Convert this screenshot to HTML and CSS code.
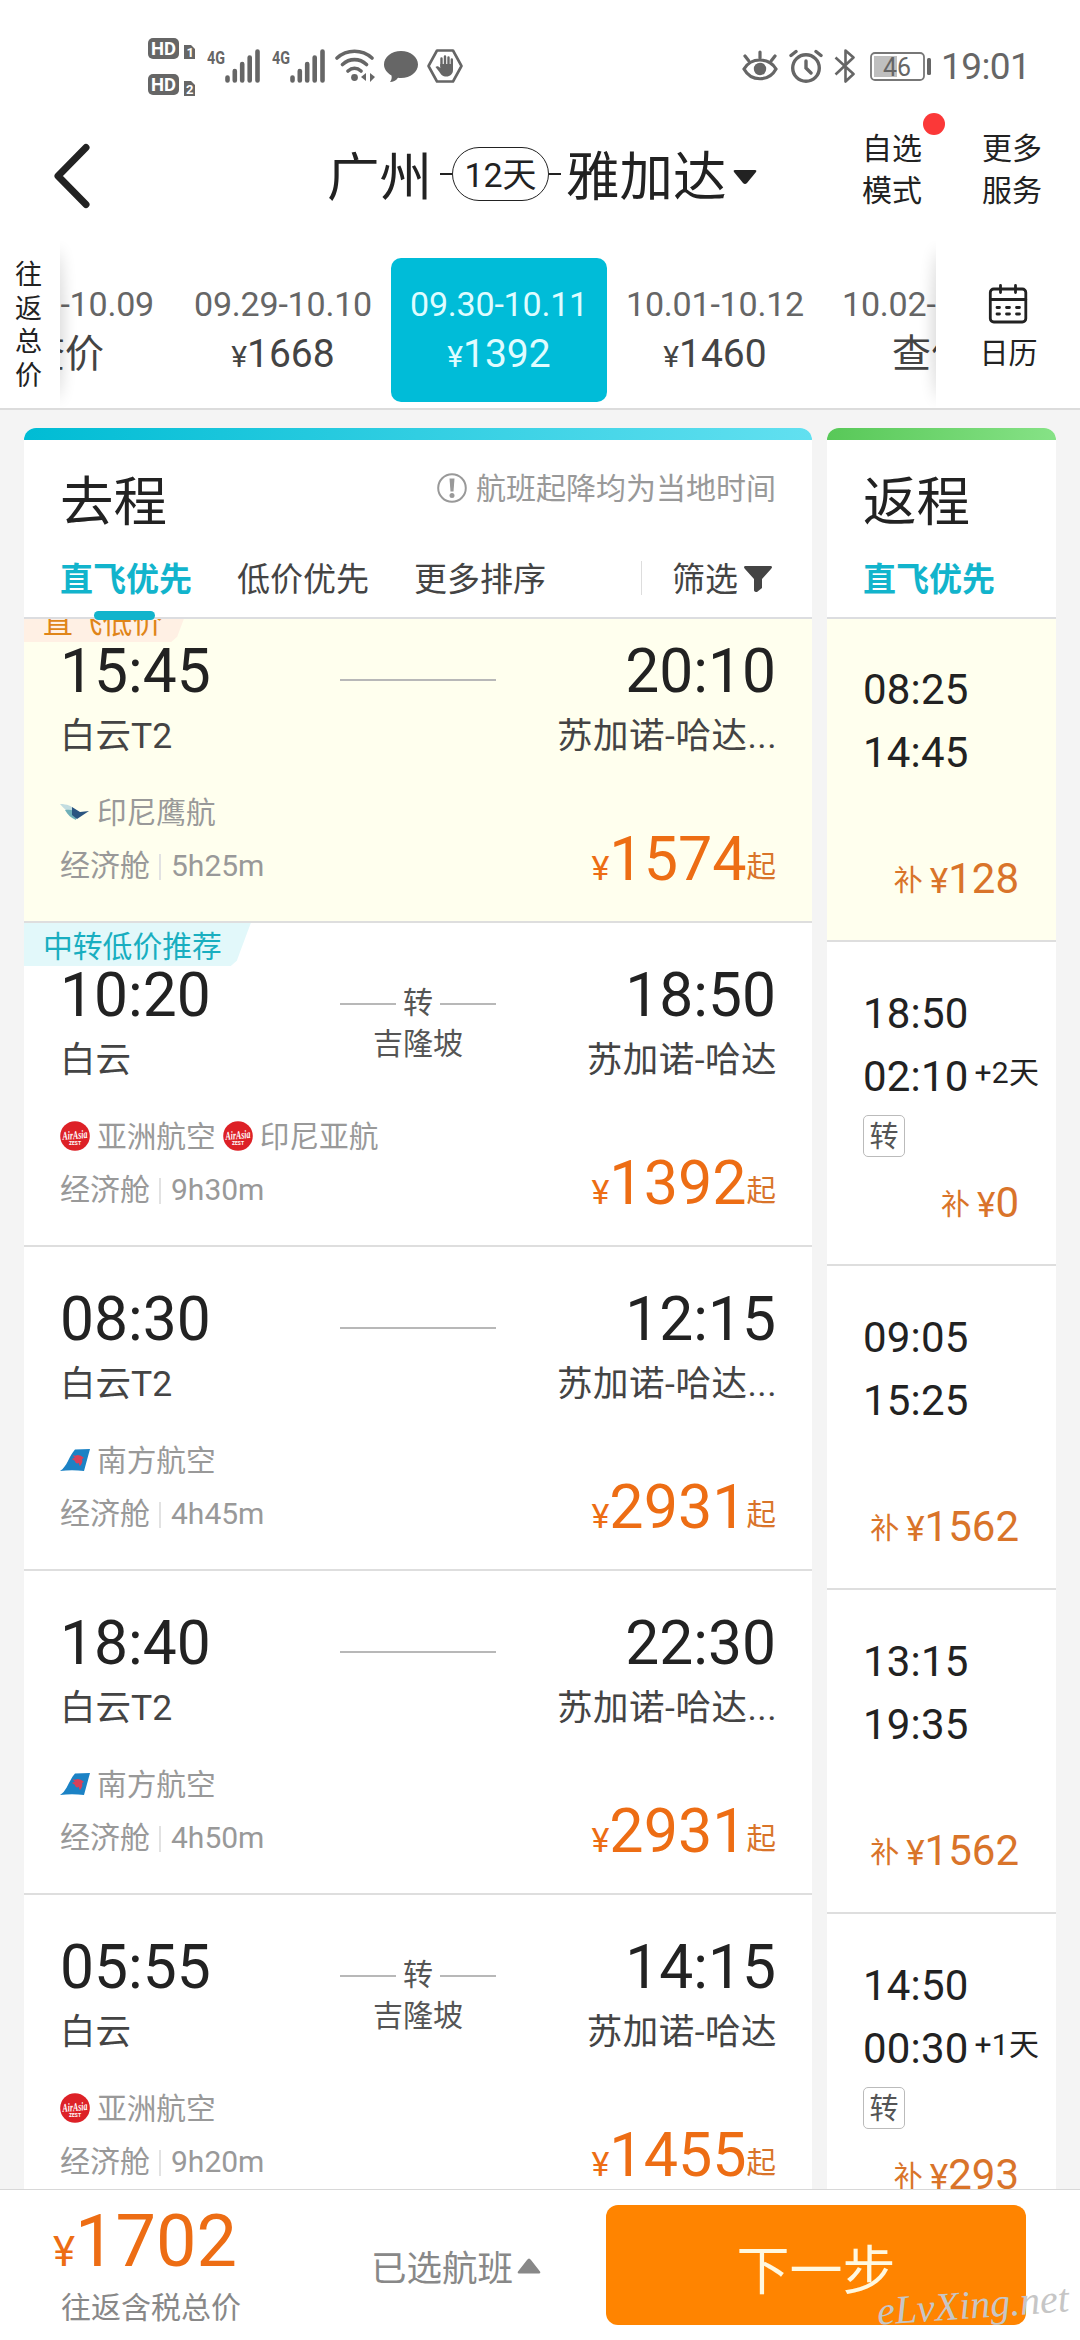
FILE: index.html
```html
<!DOCTYPE html>
<html lang="zh-CN">
<head>
    <meta charset="UTF-8">
    <meta name="viewport" content="width=device-width, initial-scale=1.0">
    <title>广州 - 雅加达</title>
    <link rel="stylesheet" href="styles.css">
</head>
<body>

<!-- shared icons -->
<svg class="defs">
    <symbol id="signal" viewBox="0 0 54 34">
        <text x="0" y="15" font-size="19" font-weight="700" textLength="18" lengthAdjust="spacingAndGlyphs">4G</text>
        <path d="M20.500 28.500v3M27.800 22v9.500M35.200 15v16.500M42.700 8.500v23M50.500 2.500v29" fill="none" stroke="#666" stroke-width="4.600" stroke-linecap="round"/>
    </symbol>
    <symbol id="garuda" viewBox="0 0 30 30">
        <path d="M0 7c7 0 12 2 15 6l-3 4C7 14 3 11 0 7z" fill="#c3dde0"/>
        <path d="M5 13c5-1 9 0 12 3l-1 7c-5-2-8-5-11-10z" fill="#6fb0b8"/>
        <path d="M12 10l8 5 9-1-6 4-6 4-5-4z" fill="#2b5580"/>
    </symbol>
    <symbol id="airasia" viewBox="0 0 30 30">
        <circle cx="15" cy="15" r="14.800" fill="#dd2127"/>
        <text x="2.500" y="18" font-size="12" font-family="Liberation Serif" font-style="italic" font-weight="700" fill="#fff" textLength="25" lengthAdjust="spacingAndGlyphs" transform="rotate(-5 15 15)">AirAsia</text>
        <text x="9" y="24" font-size="5.500" font-weight="700" fill="#fff" textLength="12" lengthAdjust="spacingAndGlyphs">ZEST</text>
    </symbol>
    <symbol id="southern" viewBox="0 0 30 30">
        <path d="M0 26C7 22 9 11 15 4.500L30 4l-6 22c-8-1-16-1-24 0z" fill="#1b82c5"/>
        <path d="M13 10c1 1 3 1 4 0 3 0 5 1 7 3l-2 1c1 2 0 5-2 7-1-1-1-2-1-3-2 1-4 0-4-2l-3-2c1-1 2-1 3-1-1-1-2-2-2-3z" fill="#d8405a"/>
    </symbol>
</svg>

<div class="status">
    <svg class="hd" width="48" height="60" viewBox="0 0 48 60">
        <rect x="0" y="1" width="31" height="21" rx="5" fill="#666"/>
        <text x="3" y="18" font-size="19" font-weight="700" fill="#fff" textLength="25" lengthAdjust="spacingAndGlyphs">HD</text>
        <path d="M36 8h7l4 4v10H36z" fill="#666"/>
        <text x="38.500" y="20" font-size="13" font-weight="700" fill="#fff">1</text>
        <rect x="0" y="37" width="31" height="21" rx="5" fill="#666"/>
        <text x="3" y="54" font-size="19" font-weight="700" fill="#fff" textLength="25" lengthAdjust="spacingAndGlyphs">HD</text>
        <path d="M36 44h7l4 4v11H36z" fill="#666"/>
        <text x="38" y="57" font-size="13" font-weight="700" fill="#fff">2</text>
    </svg>
    <svg class="sig" width="54" height="34"><use href="#signal"/></svg>
    <svg class="sig" width="54" height="34"><use href="#signal"/></svg>
    <svg class="wifi" width="40" height="34" viewBox="0 0 40 34">
        <g fill="none" stroke="#666" stroke-width="3.600" stroke-linecap="round">
            <path d="M2 9c10-9 25-9 35 0M7.500 15.500c7-6.500 17-6.500 24 0M13 22c4-3.500 9-3.500 13 0"/>
        </g>
        <circle cx="19.500" cy="28.500" r="3.400" fill="#666"/>
        <path d="M31 24v8l-5-4zM35 24l5 4-5 5z" fill="#666"/>
    </svg>
    <svg class="bubble" width="34" height="34" viewBox="0 0 34 34">
        <path d="M17 2c9.500 0 17 6 17 13.500S26.500 29 17 29c-1 0-2 0-3-.3-2 3-5 4.300-8 4.300 1.500-2 2-4 1.500-6.500C3 24 0 20 0 15.500 0 8 7.500 2 17 2z" fill="#666"/>
    </svg>
    <svg width="36" height="34" viewBox="0 0 36 34">
        <path d="M10 1.500h16L34.500 17 26 32.500H10L1.500 17z" fill="none" stroke="#666" stroke-width="2.600" stroke-linejoin="round"/>
        <path d="M14.500 17V9.500M18 16V7.500M21.500 16V8.500M24.800 18v-7.500" stroke="#666" stroke-width="2.400" stroke-linecap="round"/>
        <path d="M13.300 15H26v6c0 4-3 6.500-6.500 6.500-4 0-5.500-2-7.500-5l-3.500-4.500c1.500-1.500 3-1 4.800 1z" fill="#666"/>
    </svg>
    <div class="status-right">
        <svg width="36" height="34" viewBox="0 0 36 34">
            <g fill="none" stroke="#666" stroke-width="3.200" stroke-linecap="round">
                <path d="M2 20c7-12 25-12 32 0-7 13-25 13-32 0zM18 3v6M3 7l3.500 4.500M33 7l-3.500 4.500"/>
            </g>
            <circle cx="18" cy="20" r="6.200" fill="#666"/>
        </svg>
        <svg width="34" height="34" viewBox="0 0 34 34">
            <g fill="none" stroke="#666" stroke-width="3.400" stroke-linecap="round">
                <circle cx="17" cy="19" r="13.300"/>
                <path d="M17 12v7l5 5M2 6.500l5-4M32 6.500l-5-4"/>
            </g>
        </svg>
        <svg width="22" height="34" viewBox="0 0 22 34">
            <path d="M1.500 8.500L19.500 25l-8 7.500v-31l8 7L1.500 25.500" fill="none" stroke="#666" stroke-width="2.600" stroke-linejoin="round"/>
        </svg>
        <svg class="battery" width="62" height="34" viewBox="0 0 62 34">
            <rect x="1" y="4" width="53" height="27" rx="4" fill="none" stroke="#777" stroke-width="1.800"/>
            <rect x="4" y="7" width="23" height="21" fill="#bfbfbf"/>
            <rect x="57" y="9" width="4" height="17" rx="1.500" fill="#666"/>
            <text x="13" y="26.500" font-size="26" textLength="28" lengthAdjust="spacingAndGlyphs">46</text>
        </svg>
        <span class="clock">19:01</span>
    </div>
</div>

<header class="header">
    <svg class="back" width="38" height="66" viewBox="0 0 38 66">
        <path d="M33 4.500L5 33l28 28.500" fill="none" stroke="#222" stroke-width="7" stroke-linecap="round" stroke-linejoin="round"/>
    </svg>
    <div class="route">
        <span class="city">广州</span>
        <i class="dash"></i><span class="days">12天</span><i class="dash"></i>
        <span class="city to">雅加达</span>
        <svg class="caret" width="24" height="15" viewBox="0 0 24 15"><path d="M2 0h20q2 0 1 2L14 13q-2 2-4 0L1 2q-1-2 1-2z" fill="#222"/></svg>
    </div>
    <div class="actions">
        <div class="action has-dot">自选<br>模式</div>
        <div class="action">更多<br>服务</div>
    </div>
</header>

<section class="dates">
    <div class="dates-label">往返总价</div>
    <div class="dates-scroll">
        <div class="date"><span>09.28-10.09</span><b>查价</b></div>
        <div class="date"><span>09.29-10.10</span><b><small>¥</small>1668</b></div>
        <div class="date active"><span>09.30-10.11</span><b><small>¥</small>1392</b></div>
        <div class="date"><span>10.01-10.12</span><b><small>¥</small>1460</b></div>
        <div class="date"><span>10.02-10.13</span><b>查价</b></div>
    </div>
    <div class="calendar">
        <svg width="40" height="40" viewBox="0 0 40 40">
            <g fill="none" stroke="#222" stroke-width="2.800" stroke-linecap="round">
                <rect x="2.300" y="5" width="35.500" height="33" rx="3.500"/>
                <path d="M2.300 15.500h35.500M12.500 1.500v7M27.500 1.500v7"/>
                <path d="M9 23.500h2.500M18.500 23.500h3M28.500 23.500h3M9 30h2.500M18.500 30h3M28.500 30h3"/>
            </g>
        </svg>
        <span>日历</span>
    </div>
</section>

<main class="panels">
    <section class="panel depart">
        <div class="panel-head">
            <div class="panel-title">
                <h2>去程</h2>
                <div class="notice">
                    <svg width="30" height="30" viewBox="0 0 30 30">
                        <circle cx="15" cy="15" r="13.800" fill="none" stroke="#999" stroke-width="2"/>
                        <path d="M12.500 5.500h5l-1 13h-3z" fill="#999"/><circle cx="15" cy="22.500" r="2.500" fill="#999"/>
                    </svg>
                    航班起降均为当地时间
                </div>
            </div>
            <div class="tabs">
                <span class="tab active">直飞优先</span>
                <span class="tab">低价优先</span>
                <span class="tab">更多排序</span>
                <span class="filter">筛选
                    <svg width="28" height="26" viewBox="0 0 28 26"><path d="M1 0h26q2 1 0 3l-9 10v9l-5 4q-3 0-3-2V13L1 3q-2-2 0-3z" fill="#444"/></svg>
                </span>
            </div>
        </div>
        <div class="list">
            <div class="flight selected scrolled">
                <div class="tag tag-orange">直飞低价</div>
                <div class="legs">
                    <div class="stop"><time>15:45</time><p>白云T2</p></div>
                    <div class="via"><div class="via-line"></div></div>
                    <div class="stop end"><time>20:10</time><p>苏加诺-哈达...</p></div>
                </div>
                <div class="info">
                    <div>
                        <p class="airline"><svg width="30" height="30"><use href="#garuda"/></svg>印尼鹰航</p>
                        <p class="cabin">经济舱<i></i>5h25m</p>
                    </div>
                    <div class="price"><small>¥</small>1574<em>起</em></div>
                </div>
            </div>
            <div class="flight">
                <div class="tag tag-blue">中转低价推荐</div>
                <div class="legs">
                    <div class="stop"><time>10:20</time><p>白云</p></div>
                    <div class="via"><div class="via-line split">转</div>吉隆坡</div>
                    <div class="stop end"><time>18:50</time><p>苏加诺-哈达</p></div>
                </div>
                <div class="info">
                    <div>
                        <p class="airline"><svg width="30" height="30"><use href="#airasia"/></svg>亚洲航空<svg width="30" height="30"><use href="#airasia"/></svg>印尼亚航</p>
                        <p class="cabin">经济舱<i></i>9h30m</p>
                    </div>
                    <div class="price"><small>¥</small>1392<em>起</em></div>
                </div>
            </div>
            <div class="flight">
                <div class="legs">
                    <div class="stop"><time>08:30</time><p>白云T2</p></div>
                    <div class="via"><div class="via-line"></div></div>
                    <div class="stop end"><time>12:15</time><p>苏加诺-哈达...</p></div>
                </div>
                <div class="info">
                    <div>
                        <p class="airline"><svg width="30" height="30"><use href="#southern"/></svg>南方航空</p>
                        <p class="cabin">经济舱<i></i>4h45m</p>
                    </div>
                    <div class="price"><small>¥</small>2931<em>起</em></div>
                </div>
            </div>
            <div class="flight">
                <div class="legs">
                    <div class="stop"><time>18:40</time><p>白云T2</p></div>
                    <div class="via"><div class="via-line"></div></div>
                    <div class="stop end"><time>22:30</time><p>苏加诺-哈达...</p></div>
                </div>
                <div class="info">
                    <div>
                        <p class="airline"><svg width="30" height="30"><use href="#southern"/></svg>南方航空</p>
                        <p class="cabin">经济舱<i></i>4h50m</p>
                    </div>
                    <div class="price"><small>¥</small>2931<em>起</em></div>
                </div>
            </div>
            <div class="flight">
                <div class="legs">
                    <div class="stop"><time>05:55</time><p>白云</p></div>
                    <div class="via"><div class="via-line split">转</div>吉隆坡</div>
                    <div class="stop end"><time>14:15</time><p>苏加诺-哈达</p></div>
                </div>
                <div class="info">
                    <div>
                        <p class="airline"><svg width="30" height="30"><use href="#airasia"/></svg>亚洲航空</p>
                        <p class="cabin">经济舱<i></i>9h20m</p>
                    </div>
                    <div class="price"><small>¥</small>1455<em>起</em></div>
                </div>
            </div>
        </div>
    </section>

    <section class="panel return">
        <div class="panel-head">
            <div class="panel-title"><h2>返程</h2></div>
            <div class="tabs"><span class="tab current">直飞优先</span></div>
        </div>
        <div class="list">
            <div class="back-flight selected">
                <p>08:25</p>
                <p>14:45</p>
                <div class="extra"><em>补</em><small>¥</small>128</div>
            </div>
            <div class="back-flight">
                <p>18:50</p>
                <p>02:10<sup>+2天</sup></p>
                <span class="transfer">转</span>
                <div class="extra"><em>补</em><small>¥</small>0</div>
            </div>
            <div class="back-flight">
                <p>09:05</p>
                <p>15:25</p>
                <div class="extra"><em>补</em><small>¥</small>1562</div>
            </div>
            <div class="back-flight">
                <p>13:15</p>
                <p>19:35</p>
                <div class="extra"><em>补</em><small>¥</small>1562</div>
            </div>
            <div class="back-flight">
                <p>14:50</p>
                <p>00:30<sup>+1天</sup></p>
                <span class="transfer">转</span>
                <div class="extra"><em>补</em><small>¥</small>293</div>
            </div>
        </div>
    </section>
</main>

<footer class="footer">
    <div class="total">
        <div class="total-price"><small>¥</small>1702</div>
        <p>往返含税总价</p>
    </div>
    <div class="chosen">已选航班<svg width="24" height="16" viewBox="0 0 24 16"><path d="M1 13.500L10 2q2-3 4 0l9 11.500q1 2-1 2H2q-2 0-1-2z" fill="#888"/></svg></div>
    <button class="next">下一步</button>
    <svg class="watermark" width="204" height="60" viewBox="0 0 204 60">
        <text x="4" y="41" font-size="40" textLength="192" lengthAdjust="spacingAndGlyphs" transform="rotate(-4 100 30)">eLvXing.net</text>
    </svg>
</footer>

</body>
</html>
```
FILE: styles.css
```css
* {
    box-sizing: border-box;
}

body {
    margin: 0;
    width: 1080px;
    height: 2340px;
    display: flex;
    flex-direction: column;
    overflow: hidden;
    background: #fff;
    color: #222;
    font-family: Roboto, "Noto Sans CJK SC", sans-serif;
}

p, h2 {
    margin: 0;
    font-weight: 400;
}

em, i, b {
    font-style: normal;
    font-weight: 400;
}

svg {
    flex: none;
    display: block;
}

.defs {
    display: none;
}

/* status bar */
.status {
    height: 110px;
    padding: 49px 55px 0 148px;
    display: flex;
    align-items: flex-start;
    fill: #666;
}

.hd {
    margin: -12px 11px 0 0;
}

.sig {
    margin-right: 11px;
}

.wifi {
    margin: 0 9px 0 -2px;
}

.bubble {
    margin-right: 9px;
}

.status-right {
    margin-left: auto;
    display: flex;
    gap: 11px;
}

.battery {
    margin-left: 3px;
}

.clock {
    font-size: 37px;
    line-height: 36px;
    color: #666;
    width: 84px;
    margin-left: -2px;
    white-space: nowrap;
    letter-spacing: -.6px;
}

/* header */
.header {
    height: 131px;
    padding: 0 38px 0 53px;
    display: flex;
    align-items: flex-start;
}

.back {
    margin-top: 33px;
}

.route {
    display: flex;
    align-items: center;
    margin: 34px 0 0 236px;
    height: 60px;
    font-size: 52.500px;
    line-height: 60px;
}

.city {
    padding-top: 8px;
}

.route .to {
    font-size: 53.500px;
    margin: 0 6px 0 5px;
}

.caret {
    margin-top: 6px;
}

.dash {
    width: 12px;
    height: 2px;
    background: #222;
}

.dash:first-of-type {
    margin-left: 8px;
}

.days {
    width: 97px;
    height: 54px;
    border: 1.500px solid #222;
    border-radius: 27px;
    font-size: 34px;
    line-height: 55px;
    text-align: center;
}

.actions {
    margin-left: auto;
    display: flex;
    gap: 60px;
}

.action {
    position: relative;
    margin-top: 18px;
    font-size: 30px;
    line-height: 42px;
}

.has-dot::after {
    content: "";
    position: absolute;
    top: -15px;
    right: -23px;
    width: 22px;
    height: 22px;
    border-radius: 50%;
    background: #fb3838;
}

/* date strip */
.dates {
    height: 169px;
    display: flex;
    border-bottom: 2px solid #dcdcdc;
}

.dates-label {
    width: 60px;
    padding: 18px 17px 0 15px;
    font-size: 27px;
    line-height: 33.500px;
    word-break: break-all;
}

.dates-scroll {
    position: relative;
    width: 876px;
    display: flex;
    overflow: hidden;
    padding: 17px 0 0;
}

/* edge shadows under the fixed columns */
.dates-scroll::before,
.dates-scroll::after {
    content: "";
    position: absolute;
    top: 10px;
    bottom: 10px;
    width: 10px;
    border-radius: 50%;
    box-shadow: 0 0 16px 2px rgba(0, 0, 0, .2);
    left: -10px;
}

.dates-scroll::after {
    left: auto;
    right: -10px;
}

.date {
    flex: none;
    width: 216px;
    height: 144px;
    padding-top: 24px;
    border-radius: 10px;
    text-align: center;
    color: #666;
}

.date:first-child {
    margin: 0 2px 0 -103px;
}

.date span {
    display: block;
    font-size: 34px;
    line-height: 44px;
    letter-spacing: -.2px;
}

.date b {
    display: block;
    font-size: 39px;
    line-height: 56px;
    color: #444;
}

.date small {
    font-size: 30px;
}

.date.active,
.date.active b {
    background: #00bcd8;
    color: #dffcff;
}

.calendar {
    width: 144px;
    padding-top: 43px;
    display: flex;
    flex-direction: column;
    align-items: center;
    font-size: 29px;
    line-height: 40px;
}

.calendar span {
    margin: 10px 0 0 1px;
}

/* panels */
.panels {
    flex: 1;
    min-height: 0;
    padding: 18px 24px 0;
    display: flex;
    gap: 15px;
    background: #f4f4f4;
}

.panel {
    display: flex;
    flex-direction: column;
    background: #fff;
    border-radius: 12px 12px 0 0;
    overflow: hidden;
}

.depart {
    width: 788px;
}

.return {
    width: 229px;
}

.panel-head {
    position: relative;
    z-index: 1;
    height: 191px;
    flex: none;
    padding: 0 36px;
    border-bottom: 2px solid #dcdde0;
    background: linear-gradient(90deg, #00bcd4, #62e0f0) no-repeat 0 0 / 100% 12px, #fff;
}

.return .panel-head {
    background: linear-gradient(90deg, #58c858, #86e286) no-repeat 0 0 / 100% 12px, #fff;
}

.panel-title {
    display: flex;
    justify-content: space-between;
    height: 128px;
    padding-top: 40px;
}

.panel-title h2 {
    padding-top: 3px;
    font-size: 53.500px;
    line-height: 64px;
}

.notice {
    display: flex;
    gap: 9px;
    height: 40px;
    font-size: 30px;
    line-height: 41px;
    color: #999;
}

.notice svg {
    margin-top: 5px;
}

.tabs {
    display: flex;
    font-size: 33px;
    line-height: 48px;
    color: #444;
    white-space: nowrap;
}

.tab {
    position: relative;
    margin-right: 45px;
}

.tab.active,
.tab.current {
    color: #12b4cc;
    font-weight: 700;
}

.tab.active::after {
    content: "";
    position: absolute;
    left: 34px;
    top: 55px;
    width: 61px;
    height: 9px;
    border-radius: 5px;
    background: #12b4cc;
}

.filter {
    margin-left: auto;
    display: flex;
    align-items: center;
    gap: 6px;
    padding-left: 31px;
    margin-right: 4px;
    background: linear-gradient(#ddd, #ddd) no-repeat 0 5px / 1px 34px;
}

.filter svg {
    margin-top: -3px;
}

.list {
    flex: 1;
    min-height: 0;
    overflow: hidden;
}

.flight {
    position: relative;
    height: 324px;
    padding: 36px 36px 0;
    border-bottom: 2px solid #dedede;
}

.scrolled {
    margin-top: -20px;
}

.selected {
    background: #ffffee;
}

.tag {
    position: absolute;
    left: 0;
    top: 0;
    height: 43px;
    padding: 0 29px 0 19px;
    font-size: 29.800px;
    line-height: 47px;
    clip-path: polygon(0 0, 100% 0, calc(100% - 14px) 88%, calc(100% - 20px) 100%, 0 100%);
}

.tag-orange {
    background: #fff0e4;
    color: #e08518;
}

.tag-blue {
    background: #e2f8fa;
    color: #18aec0;
}

.legs {
    position: relative;
    display: flex;
    justify-content: space-between;
    height: 160px;
}

.stop {
    width: 240px;
}

.stop.end {
    text-align: right;
}

.stop time {
    display: block;
    font-size: 60.500px;
    line-height: 73px;
}

.stop p {
    margin-top: 6px;
    font-size: 35.500px;
    line-height: 44px;
    color: #444;
    white-space: nowrap;
}

.stop.end p {
    letter-spacing: .5px;
    margin-right: -1px;
}

.via {
    width: 156px;
    padding-top: 26px;
    font-size: 30px;
    line-height: 36px;
    text-align: center;
    color: #555;
}

.via-line {
    height: 36px;
    margin-bottom: 5px;
    background: linear-gradient(#b8b8b8, #b8b8b8) no-repeat 0 18px / 100% 2px;
}

.via-line.split {
    background: linear-gradient(90deg, #b8b8b8 56px, transparent 56px, transparent 100px, #b8b8b8 100px) no-repeat 0 18px / 100% 2px;
}

.info {
    display: flex;
    justify-content: space-between;
    color: #999;
    font-size: 30px;
    line-height: 36px;
}

.airline {
    display: flex;
    gap: 7px;
    height: 53px;
    font-size: 29.700px;
}

.airline svg {
    margin-top: 2px;
}

.cabin {
    display: flex;
}

.cabin i {
    width: 2px;
    height: 26px;
    margin: 6px 10px 0 9px;
    background: #e2e2e2;
}

.price {
    margin-top: 28px;
    font-size: 61px;
    line-height: 72px;
    color: #ed6d14;
    white-space: nowrap;
}

.price small {
    font-size: 34px;
}

.price em {
    font-size: 29.500px;
    line-height: 0;
    vertical-align: 3px;
    color: #d9742a;
}

.back-flight {
    height: 324px;
    padding: 40px 0 33px 36px;
    border-bottom: 2px solid #dedede;
    display: flex;
    flex-direction: column;
    font-size: 42px;
}

/* this column is not scrolled, its first row starts right under the header */
.back-flight:first-child {
    height: 323px;
    padding-top: 39px;
}

.back-flight p {
    line-height: 63px;
    white-space: nowrap;
    letter-spacing: .2px;
}

.back-flight sup {
    margin-left: 6px;
    font-size: 30px;
    line-height: 0;
    vertical-align: 8px;
}

.transfer {
    width: 42px;
    height: 42px;
    margin-top: 7px;
    border: 1.500px solid #bbb;
    border-radius: 5px;
    font-size: 29px;
    line-height: 42px;
    text-align: center;
    color: #555;
}

.extra {
    margin: auto 37px 0 0;
    line-height: 50px;
    text-align: right;
    color: #d9742a;
}

.extra em {
    margin-right: 7px;
    font-size: 29px;
    line-height: 0;
    vertical-align: 2px;
}

.extra small {
    font-size: 35px;
}

/* footer */
.footer {
    position: relative;
    height: 151px;
    display: flex;
    border-top: 1px solid #d8d8d8;
    background: #fff;
}

.total {
    width: 371px;
    padding: 7px 0 0 53px;
}

.total-price {
    font-size: 72px;
    line-height: 90px;
    color: #ed6d14;
}

.total-price small {
    font-size: 42px;
}

.total p {
    margin-top: -9px;
    padding-left: 8px;
    font-size: 30px;
    line-height: 40px;
    color: #888;
}

.chosen {
    display: flex;
    width: 235px;
    padding-top: 54px;
    font-size: 35.500px;
    line-height: 50px;
    color: #888;
}

.chosen svg {
    margin: 14px 0 0 4px;
}

.next {
    width: 420px;
    height: 120px;
    margin-top: 15px;
    padding-top: 5px;
    border: 0;
    border-radius: 12px;
    background: #ff8400;
    color: #fff8e0;
    font-family: inherit;
    font-size: 53px;
}

.watermark {
    position: absolute;
    left: 873px;
    top: 87px;
    fill: #c6c6c6;
    font-family: "Liberation Serif", cursive;
    font-style: italic;
}
```
